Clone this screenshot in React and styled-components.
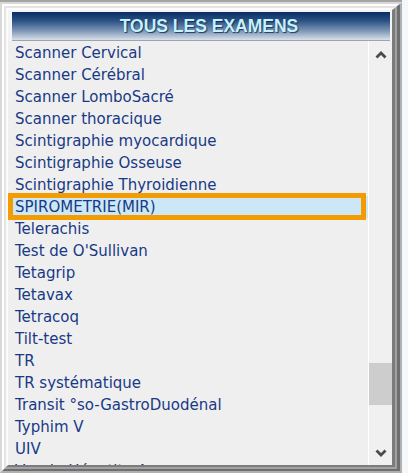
import React from 'react';
import styled, { createGlobalStyle } from 'styled-components';

const Global = createGlobalStyle`
  html, body { margin: 0; padding: 0; background: #f5f8fb; }
  body { width: 408px; height: 473px; overflow: hidden; }
  * { box-sizing: border-box; }
`;

const Outer = styled.div`
  width: 402px;
  border-top: 2px solid #a4a4a4;
`;

const Bevel = styled.div`
  border-style: solid;
  border-width: ${(p) => p.$w};
  border-color: ${(p) => `${p.$light} ${p.$dark} ${p.$dark} ${p.$light}`};
`;

const Content = styled.div`
  height: 455px;
  background: #f4f4f4;
  padding-top: 2px;
  display: flex;
  flex-direction: column;
`;

const Header = styled.div`
  height: 29px;
  margin: 0 2px 0 4px;
  background: linear-gradient(to bottom, #0a2d64 0%, #284f82 30%, #7891b2 65%, #d8e0ea 100%);
  border-bottom: 1px solid #9ea4ab;
  display: flex;
  align-items: center;
  justify-content: center;
  padding-left: 16px;
  font-family: "Liberation Sans", Arial, sans-serif;
  font-weight: bold;
  font-size: 17.5px;
  color: #c4f2ff;
  text-shadow: 1px 1px 1px rgba(18, 40, 78, 0.85), 0 0 1px rgba(20, 45, 90, 0.6);
`;

const ListArea = styled.div`
  flex: 1;
  display: flex;
  min-height: 0;
  background: #efefef;
`;

const Items = styled.div`
  flex: 1;
  overflow: hidden;
  padding-top: 1px;
`;

const Row = styled.div`
  position: relative;
  height: 22px;
  line-height: 23px;
  padding-left: 7px;
  font-family: "DejaVu Sans", Verdana, sans-serif;
  font-size: 15px;
  color: #183a86;
  white-space: nowrap;
  background: ${(p) => (p.$selected ? '#cce8f7' : 'transparent')};
`;

const Highlight = styled.div`
  position: absolute;
  top: -3px;
  bottom: -2px;
  left: 0;
  right: 2px;
  border: 5px solid #f39b00;
  pointer-events: none;
`;

const Scrollbar = styled.div`
  width: 24px;
  border-left: 1px solid #ffffff;
  background: #f0f0f0;
  display: flex;
  flex-direction: column;
`;

const ArrowButton = styled.div`
  height: ${(p) => p.$h}px;
  display: flex;
  align-items: center;
  justify-content: center;
`;

const Track = styled.div`
  flex: 1;
`;

const Thumb = styled.div`
  height: 42px;
  background: #cdcdcd;
`;

const Chevron = ({ down }) => (
  <svg width="12" height="8" viewBox="0 0 12 8">
    <path
      d={down ? 'M1.5 1.5 L6 6 L10.5 1.5' : 'M1.5 6.5 L6 2 L10.5 6.5'}
      fill="none"
      stroke="#4a4a4a"
      strokeWidth="2.8"
    />
  </svg>
);

const items = [
  'Scanner Cervical',
  'Scanner Cérébral',
  'Scanner LomboSacré',
  'Scanner thoracique',
  'Scintigraphie myocardique',
  'Scintigraphie Osseuse',
  'Scintigraphie Thyroidienne',
  'SPIROMETRIE(MIR)',
  'Telerachis',
  "Test de O'Sullivan",
  'Tetagrip',
  'Tetavax',
  'Tetracoq',
  'Tilt-test',
  'TR',
  'TR systématique',
  'Transit °so-GastroDuodénal',
  'Typhim V',
  'UIV',
  'Vaccin Hépatite A',
];

const SELECTED = 'SPIROMETRIE(MIR)';
const TRACK = 372;
const THUMB = 42;
const SCROLL = 0.89;

export default function App() {
  const thumbTop = Math.round((TRACK - THUMB) * SCROLL);
  return (
    <>
      <Global />
      <Outer>
        <Bevel $w="2px 2px 2px 2px" $light="#d8d8d8" $dark="#b0b0b0">
          <Bevel $w="2px 3px 2px 2px" $light="#ffffff" $dark="#6e6e6e">
            <Bevel $w="2px 2px 2px 2px" $light="#e4e4e4" $dark="#a2a2a2">
              <Bevel $w="2px 3px 2px 2px" $light="#fbfbfb" $dark="#7c7c7c">
                <Content>
                  <Header>TOUS LES EXAMENS</Header>
                  <ListArea>
                    <Items>
                      {items.map((it) => (
                        <Row key={it} $selected={it === SELECTED}>
                          {it}
                          {it === SELECTED && <Highlight />}
                        </Row>
                      ))}
                    </Items>
                    <Scrollbar>
                      <ArrowButton $h={28}>
                        <Chevron />
                      </ArrowButton>
                      <Track>
                        <Thumb style={{ marginTop: thumbTop }} />
                      </Track>
                      <ArrowButton $h={24}>
                        <Chevron down />
                      </ArrowButton>
                    </Scrollbar>
                  </ListArea>
                </Content>
              </Bevel>
            </Bevel>
          </Bevel>
        </Bevel>
      </Outer>
    </>
  );
}
